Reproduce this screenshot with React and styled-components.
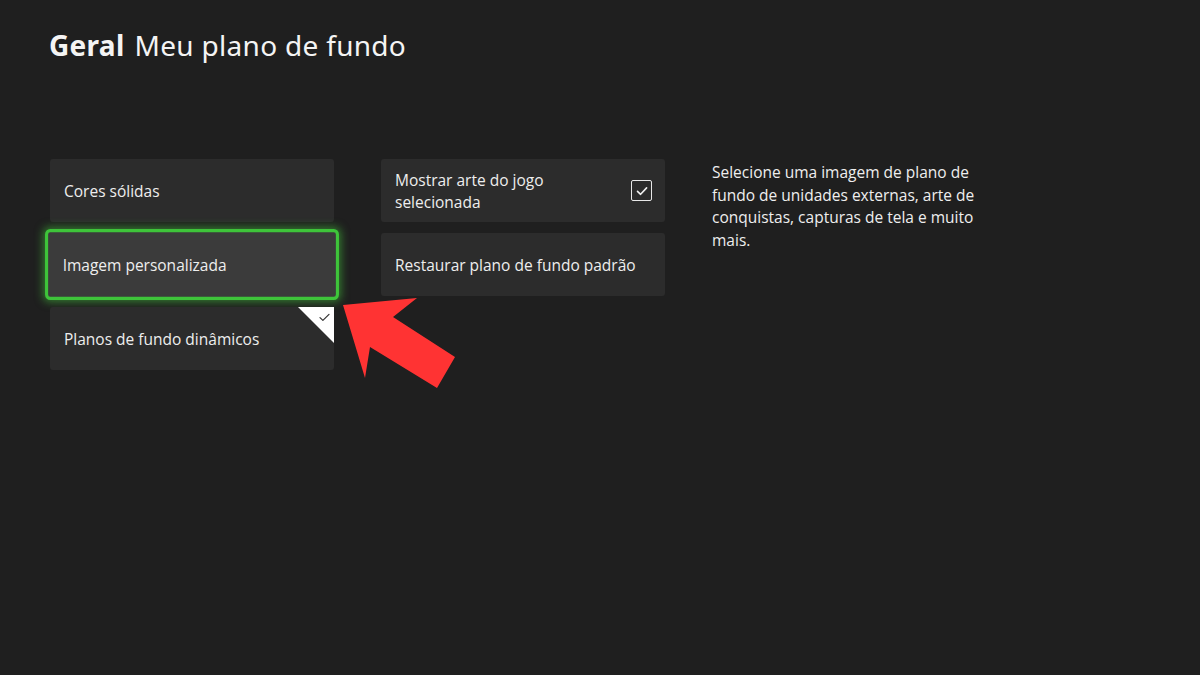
import React from 'react';
import styled, { createGlobalStyle } from 'styled-components';

const GlobalStyle = createGlobalStyle`
  html, body {
    margin: 0;
    padding: 0;
    background: #1f1f1f;
  }
  body {
    font-family: 'Open Sans', 'Noto Sans', sans-serif;
    color: #f2f2f2;
  }
`;

const Page = styled.div`
  position: relative;
  width: 1200px;
  height: 675px;
  overflow: hidden;
  background: #1f1f1f;
`;

const Header = styled.h1`
  margin: 0;
  padding: 25px 0 0 49px;
  height: 40px;
  font-family: 'Noto Sans', sans-serif;
  font-size: 28px;
  line-height: 40px;
  font-weight: 400;
  letter-spacing: 0.3px;
  color: #f4f4f4;

  b {
    font-weight: 700;
    margin-right: 10px;
  }
`;

const Columns = styled.div`
  display: grid;
  grid-template-columns: 284px 284px 300px;
  column-gap: 47px;
  padding: 94px 0 0 50px;
  align-items: start;
`;

const Stack = styled.div`
  display: flex;
  flex-direction: column;
  gap: 11px;
`;

const Tile = styled.div`
  position: relative;
  box-sizing: border-box;
  height: 63px;
  display: flex;
  align-items: center;
  justify-content: space-between;
  padding: 0 14px;
  border-radius: 3px;
  background: ${p => (p.$focused ? '#3b3b3b' : '#2c2c2c')};
  font-size: 15.5px;
  line-height: 22px;
  color: #eeeeee;

  ${p => p.$focused && `
    transform: scale(1.035, 1.13);
    border: 3px solid #3ec43a;
    border-radius: 5px;
    box-shadow: 0 0 8px 1px rgba(70, 200, 60, 0.55);
    padding: 0 14px;
  `}
`;

const Label = styled.span`
  max-width: ${p => p.$narrow ? '200px' : 'none'};
`;

// counter the focus scale so the caption keeps its normal size
const FocusLabel = styled.span`
  display: inline-block;
  transform: scale(0.966, 0.885);
  transform-origin: left center;
`;

const CheckBox = styled.span`
  box-sizing: border-box;
  width: 21px;
  height: 21px;
  border: 1.5px solid #e8e8e8;
  border-radius: 2px;
  display: flex;
  align-items: center;
  justify-content: center;
  margin-right: -1px;
`;

const CornerBadge = styled.span`
  position: absolute;
  top: 0;
  right: 0;
  width: 0;
  height: 0;
  border-style: solid;
  border-width: 0 36px 36px 0;
  border-color: transparent #ffffff transparent transparent;
`;

const BadgeCheck = styled.svg`
  position: absolute;
  top: 6px;
  right: 4px;
`;

const Description = styled.p`
  margin: 2px 0 0 0;
  font-size: 15.5px;
  line-height: 22.5px;
  color: #eeeeee;
  max-width: 290px;
`;

const Pointer = styled.svg`
  position: absolute;
  left: 330px;
  top: 290px;
`;

function Check({ size = 14, color = '#f0f0f0', stroke = 1.6 }) {
  return (
    <svg width={size} height={size} viewBox="0 0 14 14" fill="none">
      <path d="M2.5 7.4 L5.6 10.3 L11.6 3.9" stroke={color} strokeWidth={stroke} strokeLinecap="round" strokeLinejoin="round" />
    </svg>
  );
}

export default function App() {
  return (
    <Page>
      <GlobalStyle />
      <Header><b>Geral</b>Meu plano de fundo</Header>

      <Columns>
        <Stack>
          <Tile><Label>Cores sólidas</Label></Tile>
          <Tile $focused><FocusLabel>Imagem personalizada</FocusLabel></Tile>
          <Tile>
            <Label>Planos de fundo dinâmicos</Label>
            <CornerBadge />
            <BadgeCheck width="11" height="9" viewBox="0 0 11 9" fill="none">
              <path d="M1 4.6 L3.9 7.4 L10 1.3" stroke="#333" strokeWidth="1.2" strokeLinecap="round" strokeLinejoin="round" />
            </BadgeCheck>
          </Tile>
        </Stack>

        <Stack>
          <Tile>
            <Label $narrow>Mostrar arte do jogo selecionada</Label>
            <CheckBox><Check /></CheckBox>
          </Tile>
          <Tile><Label>Restaurar plano de fundo padrão</Label></Tile>
        </Stack>

        <Description>
          Selecione uma imagem de plano de fundo de unidades externas, arte de conquistas, capturas de tela e muito mais.
        </Description>
      </Columns>

      <Pointer width="140" height="110" viewBox="0 0 140 110">
        <polygon
          points="13,15 87,8 63,27 125,67 107,98 40,57 35,88"
          fill="#ff3333"
        />
      </Pointer>
    </Page>
  );
}
